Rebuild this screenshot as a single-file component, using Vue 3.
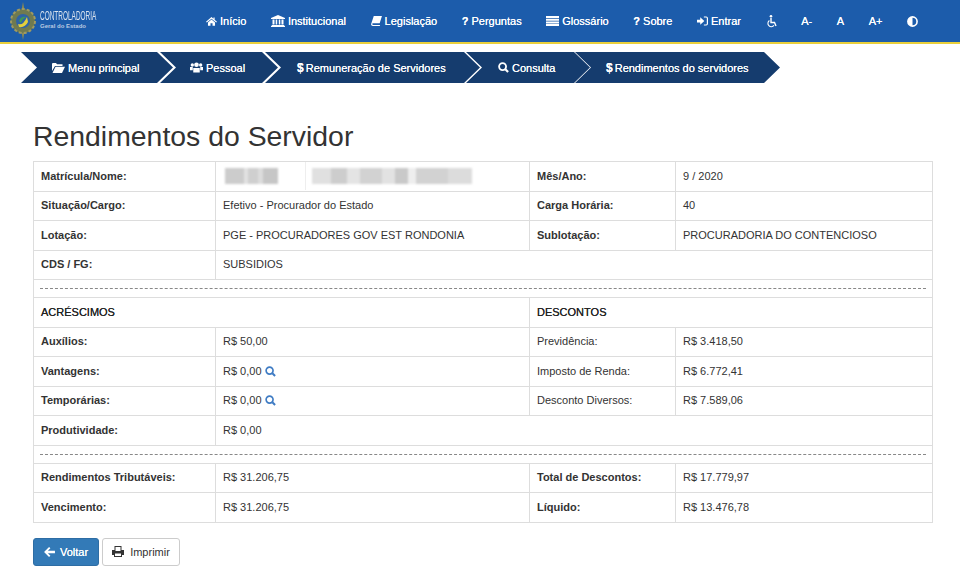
<template>
  <div class="page">
    <header class="nav">
      <div class="logo">
        <svg width="28" height="38" viewBox="0 0 28 38">
          <path d="M14 0 L15.5 8 H12.5 Z M14 38 L12.5 30 H15.5 Z" fill="#8a8a55" />
          <circle cx="14" cy="19" r="12" fill="#6f7a50" />
          <circle cx="14" cy="19" r="12" fill="none" stroke="#a09a60" stroke-width="2" stroke-dasharray="3 2" />
          <circle cx="14" cy="19" r="7" fill="#2f63a5" />
          <path d="M9 22 Q14 24 18 15 L19 20 Q16 26 10 25 Z" fill="#e3cf3c" />
          <path d="M10 19 Q12 14 17 15 Q13 17 12 21 Z" fill="#3f9a55" />
        </svg>
        <div class="logo-text">
          <span class="logo-title">CONTROLADORIA</span>
          <span class="logo-sub">Geral do Estado</span>
        </div>
      </div>
      <nav class="menu">
        <a><svg class="ni" viewBox="0 0 14 12" width="11" height="10"><path d="M7 1 L0 7 L1 8 L7 3 L13 8 L14 7 L11 4.4 V1.5 H9.5 V3 Z M2.5 8 L7 4.2 L11.5 8 V12 H8.3 V9 H5.7 V12 H2.5 Z" fill="#fff"/></svg>Início</a>
        <a><svg class="ni" viewBox="0 0 14 12" width="14" height="12"><path d="M7 0 L14 3 V4 H0 V3 Z M1.5 4.6 H3.5 V9.5 H1.5 Z M4.7 4.6 H6.2 V9.5 H4.7 Z M7.8 4.6 H9.3 V9.5 H7.8 Z M10.5 4.6 H12.5 V9.5 H10.5 Z M.7 10 H13.3 V11 H.7 Z M0 11 H14 V12 H0 Z" fill="#fff"/></svg>Institucional</a>
        <a><svg class="ni" viewBox="0 0 12 11" width="11" height="10"><path d="M3 0 H12 L9.5 8 H2 Q1.2 8 1.3 9 Q1.5 9.8 2.5 9.8 H10 L9.6 11 H2 Q0 11 0 9 Z" fill="#fff"/></svg>Legislação</a>
        <a><b class="q">?</b>Perguntas</a>
        <a><svg class="ni" viewBox="0 0 13 10" width="13" height="10"><path d="M0 0 H13 V2 H0 Z M0 2.7 H13 V4.7 H0 Z M0 5.4 H13 V7.4 H0 Z M0 8 H13 V10 H0 Z" fill="#fff"/></svg>Glossário</a>
        <a><b class="q">?</b>Sobre</a>
        <a><svg class="ni" viewBox="0 0 12 10" width="11" height="10"><path d="M0 3.5 H3.5 V1 L8 5 L3.5 9 V6.5 H0 Z M7.5 0 H10 Q12 0 12 2 V8 Q12 10 10 10 H7.5 V8.7 H10 Q10.7 8.7 10.7 8 V2 Q10.7 1.3 10 1.3 H7.5 Z" fill="#fff"/></svg>Entrar</a>
        <a><svg viewBox="0 0 11 13" width="11" height="13"><circle cx="5" cy="1.3" r="1.3" fill="#fff"/><path d="M5 3 V7.5 H8.5 L10 11" fill="none" stroke="#fff" stroke-width="1.4"/><path d="M3.4 5.5 A3.4 3.4 0 1 0 8 10.4" fill="none" stroke="#fff" stroke-width="1.1"/></svg></a>
        <a>A-</a>
        <a>A</a>
        <a>A+</a>
        <a><svg viewBox="0 0 12 12" width="11" height="11"><circle cx="6" cy="6" r="5" fill="none" stroke="#fff" stroke-width="1.8"/><path d="M6 1 A5 5 0 0 0 6 11 Z" fill="#fff"/></svg></a>
      </nav>
    </header>

    <div class="crumbs">
      <a class="crumb k1"><svg class="ci" viewBox="0 0 13 10" width="13" height="10"><path d="M0 1 Q0 0 1 0 H4 L5 1.2 H10.5 V3 H3 L0 8 Z M3.5 3.8 H13 L10 10 H0.5 Z" fill="#fff"/></svg>Menu principal</a>
      <a class="crumb k2"><svg class="ci" viewBox="0 0 14 11" width="13" height="11"><circle cx="7" cy="2.5" r="2.5" fill="#fff"/><circle cx="2.5" cy="2.8" r="1.8" fill="#fff"/><circle cx="11.5" cy="2.8" r="1.8" fill="#fff"/><path d="M3.5 6 H10.5 V11 H3.5 Z M0 5 H3 V8.5 H0 Z M11 5 H14 V8.5 H11 Z" fill="#fff"/></svg>Pessoal</a>
      <a class="crumb k3"><b class="dollar">$</b>Remuneração de Servidores</a>
      <a class="crumb k4"><svg class="ci" viewBox="0 0 12 12" width="11" height="11"><circle cx="5" cy="5" r="3.8" fill="none" stroke="#fff" stroke-width="2"/><path d="M8 8 L11 11" stroke="#fff" stroke-width="2.4"/></svg>Consulta</a>
      <a class="crumb k5"><b class="dollar">$</b>Rendimentos do servidores</a>
    </div>

    <h1>Rendimentos do Servidor</h1>

    <table>
      <colgroup><col class="c1" /><col class="c2" /><col class="c3" /><col class="c4" /></colgroup>
      <tbody>
        <tr>
          <th>Matrícula/Nome:</th>
          <td class="blurcell"><div class="blurs"><span class="b1"></span><i></i><span class="b2"></span></div></td>
          <th>Mês/Ano:</th><td>9 / 2020</td>
        </tr>
        <tr><th>Situação/Cargo:</th><td>Efetivo - Procurador do Estado</td><th>Carga Horária:</th><td>40</td></tr>
        <tr><th>Lotação:</th><td>PGE - PROCURADORES GOV EST RONDONIA</td><th>Sublotação:</th><td>PROCURADORIA DO CONTENCIOSO</td></tr>
        <tr><th>CDS / FG:</th><td colspan="3">SUBSIDIOS</td></tr>
        <tr class="sep"><td colspan="4"><div class="dash"></div></td></tr>
        <tr><td class="head" colspan="2">ACRÉSCIMOS</td><td class="head" colspan="2">DESCONTOS</td></tr>
        <tr><th>Auxílios:</th><td>R$ 50,00</td><td>Previdência:</td><td>R$ 3.418,50</td></tr>
        <tr><th>Vantagens:</th><td>R$ 0,00 <svg class="mag" viewBox="0 0 12 12" width="11" height="11"><circle cx="5" cy="5" r="3.8" fill="none" stroke="#3f7cc4" stroke-width="1.8"/><path d="M8 8 L11 11" stroke="#3f7cc4" stroke-width="2.2"/></svg></td><td>Imposto de Renda:</td><td>R$ 6.772,41</td></tr>
        <tr><th>Temporárias:</th><td>R$ 0,00 <svg class="mag" viewBox="0 0 12 12" width="11" height="11"><circle cx="5" cy="5" r="3.8" fill="none" stroke="#3f7cc4" stroke-width="1.8"/><path d="M8 8 L11 11" stroke="#3f7cc4" stroke-width="2.2"/></svg></td><td>Desconto Diversos:</td><td>R$ 7.589,06</td></tr>
        <tr><th>Produtividade:</th><td colspan="3">R$ 0,00</td></tr>
        <tr class="sep"><td colspan="4"><div class="dash"></div></td></tr>
        <tr><th>Rendimentos Tributáveis:</th><td>R$ 31.206,75</td><th>Total de Descontos:</th><td>R$ 17.779,97</td></tr>
        <tr><th>Vencimento:</th><td>R$ 31.206,75</td><th>Líquido:</th><td>R$ 13.476,78</td></tr>
      </tbody>
    </table>

    <div class="actions">
      <button class="btn primary"><svg viewBox="0 0 12 11" width="11" height="10"><path d="M5.5 0 L7 1.5 L4.2 4 H12 V7 H4.2 L7 9.5 L5.5 11 L0 5.5 Z" fill="#fff"/></svg>Voltar</button>
      <button class="btn print"><svg viewBox="0 0 12 11" width="12" height="11"><path d="M2.5 0 H9.5 V4 H12 V9 H10 V11 H2 V9 H0 V4 H2.5 Z M3.5 1 V5 H8.5 V1 Z M3 7.5 V10 H9 V7.5 Z" fill="#333" fill-rule="evenodd"/></svg>Imprimir</button>
    </div>
  </div>
</template>

<script setup>
</script>

<style>
html, body { margin: 0; background: #fff; }
</style>

<style scoped>
.page { width: 960px; height: 571px; overflow: hidden; font-family: "Liberation Sans", Arial, sans-serif; color: #333; font-size: 12px; }
.nav { height: 42px; background: #1c5cab; border-bottom: 2px solid #e9cf3a; display: flex; align-items: center; }
.logo { width: 206px; flex: none; display: flex; align-items: center; padding-left: 9px; box-sizing: border-box; gap: 3px; height: 38px; }
.logo-text { display: flex; flex-direction: column; color: #dbe4ef; margin-top: -3px; }
.logo-title { font-size: 9.5px; line-height: 12px; transform-origin: left; transform: scale(.68, 1.25); white-space: nowrap; }
.logo-sub { font-size: 6px; line-height: 8px; color: #b9cbe2; font-weight: 700; }
.menu { display: flex; align-items: center; gap: 24.6px; color: #fff; font-size: 11px; }
.menu a { display: flex; align-items: center; text-shadow: 0 0 .3px #fff; white-space: nowrap; }
.ni { margin-right: 3px; }
.q { margin-right: 3px; font-size: 11px; }
.crumbs { display: flex; height: 31px; margin: 8px 0 0 21px; }
.crumb { flex: none; display: flex; align-items: center; box-sizing: border-box; color: #fff; background: #153c6e; font-size: 11px; text-shadow: 0 0 .3px #fff; clip-path: polygon(0 0, calc(100% - 16px) 0, 100% 50%, calc(100% - 16px) 100%, 0 100%, 16px 50%); white-space: nowrap; }
.k1 { width: 152px; padding-left: 31px; margin-right: -13px; }
.k2 { width: 118px; padding-left: 30px; margin-right: -13px; }
.k3 { width: 215px; padding-left: 32px; margin-right: -14px; }
.k4 { width: 124px; padding-left: 32px; margin-right: -15px; }
.k5 { width: 205px; padding-left: 31px; }
.ci { margin-right: 3px; }
.dollar { margin-right: 2px; font-size: 12px; }
h1 { margin: 37px 0 0 33px; font-weight: 400; font-size: 28.4px; line-height: 32px; color: #333; }
table { margin: 9px 0 0 33px; width: 899px; table-layout: fixed; border-collapse: collapse; border: 1px solid #ddd; font-size: 11px; }
.c1 { width: 182px; } .c2 { width: 314px; } .c3 { width: 146px; } .c4 { width: 257px; }
th, td { border: 1px solid #ddd; padding: 0 7px 1px; text-align: left; height: 27.5px; color: #333; }
th { font-weight: 700; }
.head { font-weight: 400; color: #222; text-shadow: 0 0 .3px #333; }
.sep td { height: 17px; padding: 0 6px; }
.dash { border-top: 1px dashed #888; }
.mag { vertical-align: -2px; }
.blurcell { padding: 0; }
.blurs { display: flex; align-items: center; height: 28px; padding-left: 9px; }
.blurs i { width: 1px; height: 28px; background: #eee; margin: 0 6px 0 27px; }
.b1, .b2 { display: block; height: 16px; filter: blur(1px); }
.b1 { width: 53px; background: linear-gradient(90deg, #ccc 0 35%, #e2e2e2 35% 44%, #cfcfcf 44% 62%, #dcdcdc 62% 72%, #c6c6c6 72%); }
.b2 { width: 160px; background: linear-gradient(90deg, #e0e0e0 0 12%, #cdcdcd 12% 22%, #e4e4e4 22% 30%, #d2d2d2 30% 44%, #e2e2e2 44% 52%, #c9c9c9 52% 60%, #eee 60% 65%, #d2d2d2 65% 85%, #dcdcdc 85%); }
.actions { display: flex; gap: 3px; margin: 15px 0 0 33px; }
.btn { height: 28px; padding: 0 9px; box-sizing: border-box; font: 11px "Liberation Sans", Arial, sans-serif; display: flex; align-items: center; gap: 6px; background: #fff; color: #333; border: 1px solid #ccc; border-radius: 3px; }
.primary { background: #337ab7; border-color: #2e6da4; color: #fff; text-shadow: 0 0 .3px #fff; padding: 0 10px; gap: 5px; }
</style>
